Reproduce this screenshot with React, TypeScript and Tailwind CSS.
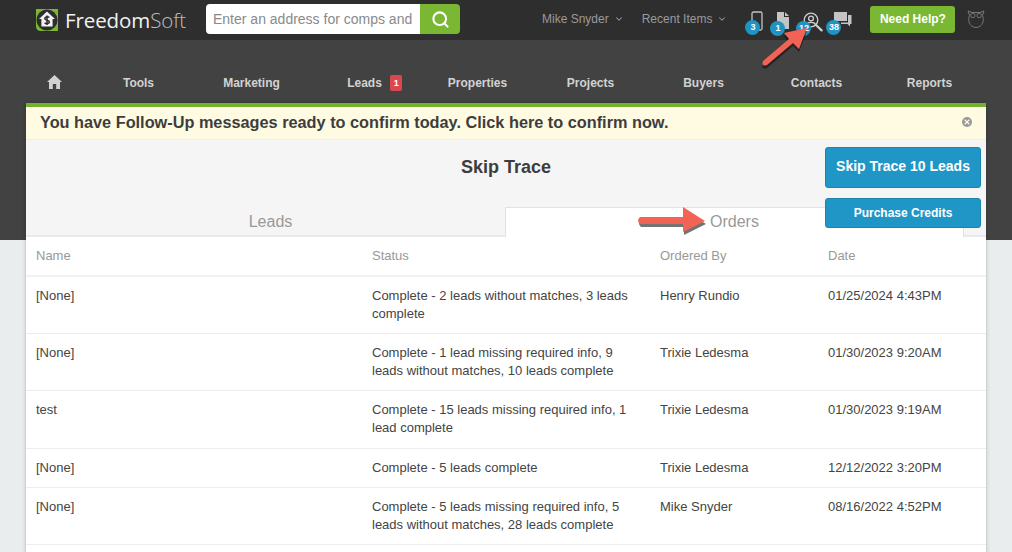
import React from 'react';
import { ChevronDown, Search, X } from 'lucide-react';

const navItems = ['Tools', 'Marketing', 'Leads', 'Properties', 'Projects', 'Buyers', 'Contacts', 'Reports'];

const orders = [
  { name: '[None]', status: 'Complete - 2 leads without matches, 3 leads complete', by: 'Henry Rundio', date: '01/25/2024 4:43PM', h: 'h-[57px]' },
  { name: '[None]', status: 'Complete - 1 lead missing required info, 9 leads without matches, 10 leads complete', by: 'Trixie Ledesma', date: '01/30/2023 9:20AM', h: 'h-[57px]' },
  { name: 'test', status: 'Complete - 15 leads missing required info, 1 lead complete', by: 'Trixie Ledesma', date: '01/30/2023 9:19AM', h: 'h-[58px]' },
  { name: '[None]', status: 'Complete - 5 leads complete', by: 'Trixie Ledesma', date: '12/12/2022 3:20PM', h: 'h-[39px]' },
  { name: '[None]', status: 'Complete - 5 leads missing required info, 5 leads without matches, 28 leads complete', by: 'Mike Snyder', date: '08/16/2022 4:52PM', h: 'h-[57px]' },
];

const Badge: React.FC<{ label: string, className: string }> = ({ label, className }) => (
  <span className={`absolute w-[15px] h-[15px] rounded-full bg-[#1f93c3] text-white text-[9px] font-bold leading-[15px] text-center ${className}`}>{label}</span>
);

const Logo = () => (
  <div className="flex items-center w-[150px] h-10">
    <svg width="24" height="24" viewBox="0 0 24 24" className="shrink-0">
      <path d="M5 1 H23 V23 H6 Q1 23 1 18 V1 Z" fill="#7ab833" />
      <circle cx="12" cy="12" r="10.5" fill="#2e2e2e" />
      <path d="M12 3.5 L20 11 H17.6 V18.5 H6.4 V11 H4 Z" fill="#f2f2f2" />
      <path d="M14.4 9.4 C12.5 8.4 9.8 8.7 9.8 10.6 C9.8 12.8 14.4 11.8 14.4 14 C14.4 15.8 11.4 16 9.6 15 M12 7.5 V17" stroke="#2e2e2e" strokeWidth="1.5" fill="none" />
    </svg>
    <span className="ml-[6px] text-[20.5px] leading-none font-['Open_Sans',sans-serif] text-[#f2f2f2] tracking-[-0.1px]">
      Freedom<span className="text-[#bdbdbd] font-light">Soft</span>
    </span>
  </div>
);

const HeaderIcons = () => (
  <div className="relative w-[125px] h-10 ml-[18px]">
    <svg width="12" height="20" viewBox="0 0 12 20" className="absolute left-[6px] top-[11px]" fill="none" stroke="#c4c4c4" strokeWidth="1.3">
      <rect x="1" y="1" width="10" height="18" rx="1.5" />
    </svg>
    <svg width="12" height="17" viewBox="0 0 12 17" className="absolute left-[32px] top-[12px]" fill="#c4c4c4">
      <path d="M0 0 H7 V5 H12 V17 H0 Z M8 0 L12 4 H8 Z" />
    </svg>
    <svg width="20" height="20" viewBox="0 0 20 20" className="absolute left-[58px] top-[12px]" fill="none" stroke="#d0d0d0" strokeWidth="1.3">
      <circle cx="8" cy="8" r="6.8" />
      <circle cx="8" cy="6.5" r="2.4" />
      <path d="M3.6 12.4 C4.6 9.8 11.4 9.8 12.4 12.4" />
      <path d="M13 13 L18.6 18.4" strokeWidth="2.2" strokeLinecap="round" />
    </svg>
    <svg width="19" height="15" viewBox="0 0 19 15" className="absolute left-[88px] top-[12px]" fill="#c4c4c4">
      <path d="M1 0 H14 V9 H1 Z" />
      <path d="M15 3 H18.5 V12 H17 V14.5 L14.5 12 H8 V10.5 H15 Z" />
    </svg>
    <Badge label="3" className="left-0 top-[20px]" />
    <Badge label="1" className="left-[25px] top-[21px]" />
    <Badge label="12" className="left-[51px] top-[21px]" />
    <Badge label="38" className="left-[81px] top-[20px]" />
  </div>
);

const Owl = () => (
  <svg width="18" height="20" viewBox="0 0 18 20" className="ml-[12px]" fill="none" stroke="#767676" strokeWidth="1">
    <path d="M1 2 L5 3.5 H13 L17 2 L15.5 6.5 C17.5 11 16 18 9 18.5 C2 18 0.5 11 2.5 6.5 Z" />
    <circle cx="5.8" cy="6.5" r="2.2" />
    <circle cx="12.2" cy="6.5" r="2.2" />
  </svg>
);

export default function App() {
  return (
    <div className="relative h-[552px] w-[1012px] overflow-hidden bg-[#e9eded] font-['Liberation_Sans',Arial,sans-serif]">
      <header className="h-10 bg-[#2e2e2e] flex items-start pl-[35px]">
        <Logo />
        <div className="ml-[21px] mt-1 flex h-[30px] w-[254px] rounded-[4px] overflow-hidden">
          <div className="w-[214px] bg-white pl-[7px] text-[14px] leading-[30px] text-[#8a8a8a] whitespace-nowrap overflow-hidden">Enter an address for comps and</div>
          <div className="w-10 bg-[#7ab833] flex items-center justify-center">
            <Search size={19} strokeWidth={2.6} color="#ffffff" />
          </div>
        </div>
        <div className="ml-[82px] flex items-center h-[37px] text-[12px] text-[#9a9a9a]">
          <span>Mike Snyder</span>
          <ChevronDown size={10} strokeWidth={2.5} className="ml-[5px]" />
          <span className="ml-[18px]">Recent Items</span>
          <ChevronDown size={10} strokeWidth={2.5} className="ml-[5px]" />
        </div>
        <HeaderIcons />
        <div className="mt-[6px] h-[27px] w-[85px] rounded-[3px] bg-[#7ab833] text-white text-[12px] font-bold leading-[26px] text-center">Need Help?</div>
        <div className="mt-[9px]"><Owl /></div>
      </header>

      <div className="h-[200px] bg-[#424242]">
        <nav className="ml-[26px] w-[960px] h-[63px] flex items-start pt-[34px] text-[12px] font-bold text-[#d2d2d2]">
          <div className="w-[56px] flex justify-center pt-[1px]">
            <svg width="15" height="14" viewBox="0 0 15 14" fill="#d2d2d2">
              <path d="M7.5 0 L15 7 H13 V14 H9.2 V9 H5.8 V14 H2 V7 H0 Z" />
            </svg>
          </div>
          {navItems.map((item) => (
            <div key={item} className="w-[113px] text-center">
              <span className="relative">
                {item}
                {item === 'Leads' && (
                  <span className="absolute left-[43px] -top-[1px] w-[12px] h-4 rounded-[2px] bg-[#d9484d] text-white text-[9px] leading-4 text-center">1</span>
                )}
              </span>
            </div>
          ))}
        </nav>
      </div>

      <main className="relative -mt-[137px] ml-[26px] w-[960px] h-[480px] bg-white border-t-[4px] border-[#74b22e] shadow-[0_0_4px_rgba(0,0,0,0.25)]">
        <div className="h-[33px] bg-[#fffbe3] border-b border-[#f2efdc] flex items-center justify-between pl-[14px] pr-[14px] pb-[2px]">
          <span className="text-[16.3px] font-bold text-[#3d3d3d] whitespace-nowrap">You have Follow-Up messages ready to confirm today. Click here to confirm now.</span>
          <span className="w-[10px] h-[10px] rounded-full bg-[#999999] flex items-center justify-center">
            <X size={8} strokeWidth={3.5} color="#fffbe3" />
          </span>
        </div>

        <div className="relative h-[97px] bg-[#f5f5f5]">
          <h1 className="pt-[16px] text-center text-[18px] leading-[22px] font-bold text-[#3d3d3d]">Skip Trace</h1>
          <div className="absolute left-0 right-0 bottom-0 flex h-[30px] border-b-[2px] border-[#eaeaea]">
            <div className="w-[479px] pl-[10px] text-center text-[16px] leading-[30px] text-[#999999]">Leads</div>
            <div className="w-[459px] h-[30px] text-center bg-white border-t border-l border-r border-[#e2e2e2] text-[16px] leading-[27px] text-[#999999]">Orders</div>
            <div className="flex-1" />
          </div>
          <div className="absolute right-[5px] top-[7px] w-[156px] flex flex-col gap-[10px]">
            <button className="h-[41px] pb-[2px] rounded-[3px] bg-[#1f96c6] border border-[#1a85b0] text-white text-[14px] font-bold">Skip Trace 10 Leads</button>
            <button className="h-[30px] pb-[1px] rounded-[3px] bg-[#1f96c6] border border-[#1a85b0] text-white text-[12px] font-bold">Purchase Credits</button>
          </div>
        </div>

        <table className="w-full table-fixed text-[13px] leading-[18px] text-[#444444]">
          <colgroup>
            <col className="w-[336px]" />
            <col className="w-[288px]" />
            <col className="w-[168px]" />
            <col />
          </colgroup>
          <thead>
            <tr className="h-[39px] border-b-[2px] border-[#f1f1f1] text-left text-[#999999]">
              <th className="pl-[10px] font-normal">Name</th>
              <th className="pl-[10px] font-normal">Status</th>
              <th className="pl-[10px] font-normal">Ordered By</th>
              <th className="pl-[10px] font-normal">Date</th>
            </tr>
          </thead>
          <tbody>
            {orders.map((order, i) => (
              <tr key={i} className={`${order.h} border-b border-[#ededed] align-top`}>
                <td className="pl-[10px] pt-[10px]">{order.name}</td>
                <td className="pl-[10px] pr-[14px] pt-[10px]">{order.status}</td>
                <td className="pl-[10px] pt-[10px]">{order.by}</td>
                <td className="pl-[10px] pt-[10px]">{order.date}</td>
              </tr>
            ))}
          </tbody>
        </table>
      </main>

      {/* annotation arrows drawn over the screenshot */}
      <svg width="70" height="60" viewBox="0 0 70 60" className="absolute left-[755px] top-[10px]">
        <path d="M8 51 L34 29 L29 23 L52 18 L44 39 L38 33 L12 55 Q6 57 8 51 Z" fill="#000000" opacity="0.45" transform="translate(0 3)" />
        <path d="M8 51 L34 29 L29 23 L52 18 L44 39 L38 33 L12 55 Q6 57 8 51 Z" fill="#f26355" />
      </svg>
      <svg width="74" height="34" viewBox="0 0 74 34" className="absolute left-[634px] top-[204px]">
        <path d="M6 13 H49 V3 L71 17 L49 28 V20 H6 Q2 16.5 6 13 Z" fill="#000000" opacity="0.55" transform="translate(1 3)" />
        <path d="M6 13 H49 V3 L71 17 L49 28 V20 H6 Q2 16.5 6 13 Z" fill="#f26355" />
      </svg>
    </div>
  );
}
